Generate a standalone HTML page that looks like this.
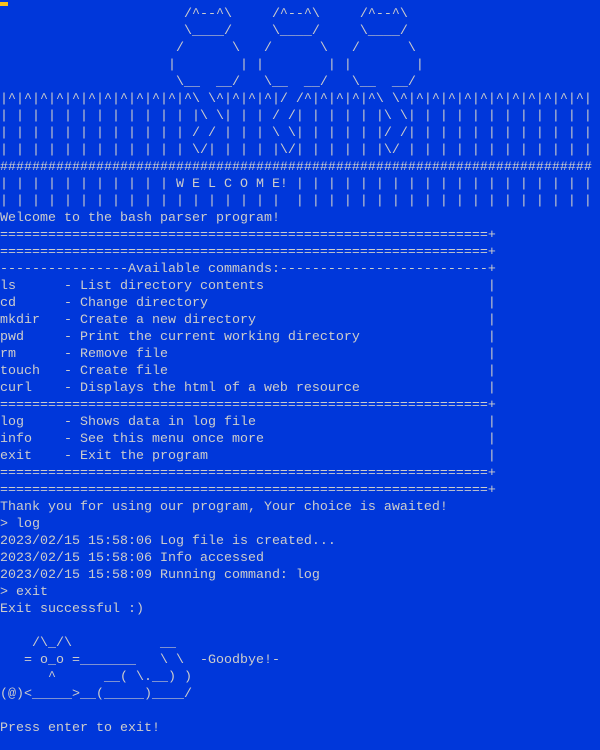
<!DOCTYPE html>
<html><head><meta charset="utf-8"><style>
html,body{margin:0;padding:0;background:#0037da;width:600px;height:750px;overflow:hidden}
#c{position:absolute;left:0;top:2px;width:8px;height:4px;background:#f9c21a}
pre{position:absolute;left:0;top:6px;margin:0;font-family:"Liberation Mono",monospace;font-size:13.33px;line-height:17px;color:#cccccc;white-space:pre}
</style></head><body><div id="c"></div><pre>                       /^--^\     /^--^\     /^--^\
                       \____/     \____/     \____/
                      /      \   /      \   /      \
                     |        | |        | |        |
                      \__  __/   \__  __/   \__  __/
|^|^|^|^|^|^|^|^|^|^|^|^\ \^|^|^|^|/ /^|^|^|^|^\ \^|^|^|^|^|^|^|^|^|^|^|^|
| | | | | | | | | | | | |\ \| | | / /| | | | | |\ \| | | | | | | | | | | |
| | | | | | | | | | | | / / | | | \ \| | | | | |/ /| | | | | | | | | | | |
| | | | | | | | | | | | \/| | | | |\/| | | | | |\/ | | | | | | | | | | | |
##########################################################################
| | | | | | | | | | | W E L C O M E! | | | | | | | | | | | | | | | | | | |
| | | | | | | | | | | | | | | | | |  | | | | | | | | | | | | | | | | | | |
Welcome to the bash parser program!
=============================================================+
=============================================================+
----------------Available commands:--------------------------+
ls      - List directory contents                            |
cd      - Change directory                                   |
mkdir   - Create a new directory                             |
pwd     - Print the current working directory                |
rm      - Remove file                                        |
touch   - Create file                                        |
curl    - Displays the html of a web resource                |
=============================================================+
log     - Shows data in log file                             |
info    - See this menu once more                            |
exit    - Exit the program                                   |
=============================================================+
=============================================================+
Thank you for using our program, Your choice is awaited!
&gt; log
2023/02/15 15:58:06 Log file is created...
2023/02/15 15:58:06 Info accessed
2023/02/15 15:58:09 Running command: log
&gt; exit
Exit successful :)

    /\_/\           __
   = o_o =_______   \ \  -Goodbye!-
      ^      __( \.__) )
(@)&lt;_____&gt;__(_____)____/

Press enter to exit!</pre></body></html>
